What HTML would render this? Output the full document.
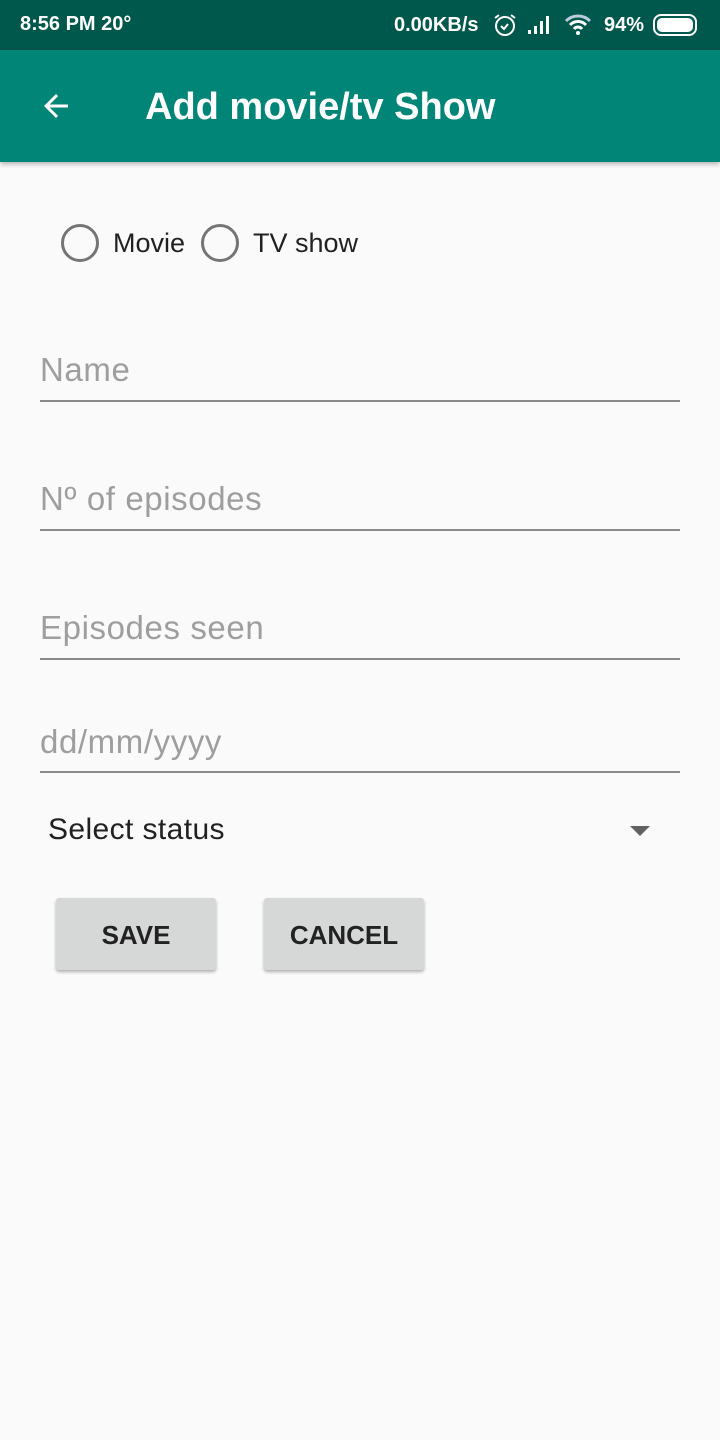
<!DOCTYPE html>
<html><head><style>
body{margin:0;width:720px;height:1440px;background:#fafafa;font-family:"Liberation Sans",sans-serif;position:relative;overflow:hidden}
.sb{position:absolute;top:0;left:0;width:720px;height:50px;background:#00574b;color:#fff;font-weight:bold;font-size:20px}
.ab{position:absolute;top:50px;left:0;width:720px;height:112px;background:#008577;box-shadow:0 2px 5px rgba(0,0,0,.3)}
.t{position:absolute;white-space:nowrap}
.radio{position:absolute;width:38px;height:38px;border:3px solid #757575;border-radius:50%;box-sizing:border-box}
.in{position:absolute;left:40px;width:640px;border-bottom:2px solid #8a8a8a;color:#9e9e9e;font-size:33px;letter-spacing:0.6px}
.btn{position:absolute;top:898px;width:160px;height:72px;background:#d6d7d7;border-radius:3px;box-shadow:0 2px 3px rgba(0,0,0,.3);font-size:26px;color:#222;text-align:center;line-height:74px;font-weight:bold}
</style></head><body>
<div class="sb">
<span class="t" style="left:20px;top:13px">8:56 PM 20°</span>
<span class="t" style="left:394px;top:14px">0.00KB/s</span>
<svg class="t" style="left:492px;top:12px" width="26" height="26" viewBox="0 0 26 26" fill="none" stroke="#fff" stroke-width="2"><circle cx="13" cy="14" r="9"/><path d="M9 14l3 3 4-5M3 6l4-3M23 6l-4-3"/></svg>
<svg class="t" style="left:526px;top:14px" width="28" height="22"><rect x="2" y="16" width="3" height="4" fill="#fff"/><rect x="8" y="12" width="3" height="8" fill="#fff"/><rect x="14" y="7" width="3" height="13" fill="#fff"/><rect x="20" y="2" width="3" height="18" fill="#fff"/></svg>
<svg class="t" style="left:564px;top:14px" width="28" height="22" viewBox="0 0 28 22"><path d="M2 7a17 17 0 0 1 24 0" stroke="#bcd" stroke-width="3" fill="none"/><path d="M6 11a11 11 0 0 1 16 0M10 15a5 5 0 0 1 8 0" stroke="#fff" stroke-width="3" fill="none"/><circle cx="14" cy="19" r="2" fill="#fff"/></svg>
<span class="t" style="left:604px;top:14px">94%</span>
<div class="t" style="left:653px;top:14px;width:44px;height:22px;border:2px solid #fff;border-radius:8px;box-sizing:border-box;padding:2px"><div style="background:#fff;height:14px;border-radius:5px"></div></div>
</div>
<div class="ab">
<svg class="t" style="left:38px;top:38px" width="36" height="36" viewBox="0 0 24 24"><path d="M20 11H7.8l5.6-5.6L12 4l-8 8 8 8 1.4-1.4L7.8 13H20z" fill="#fff"/></svg>
<span class="t" style="left:145px;top:36px;color:#fff;font-size:38px;font-weight:bold">Add movie/tv Show</span>
</div>
<div class="radio" style="left:61px;top:224px"></div>
<span class="t" style="left:113px;top:228px;font-size:27px;color:#212121">Movie</span>
<div class="radio" style="left:201px;top:224px"></div>
<span class="t" style="left:253px;top:228px;font-size:27px;color:#212121">TV show</span>
<div class="in" style="top:351px;height:49px">Name</div>
<div class="in" style="top:480px;height:49px">Nº of episodes</div>
<div class="in" style="top:609px;height:49px">Episodes seen</div>
<div class="in" style="top:723px;height:48px">dd/mm/yyyy</div>
<span class="t" style="left:48px;top:813px;font-size:30px;color:#212121;letter-spacing:0.4px">Select status</span>
<div class="t" style="left:630px;top:826px;width:0;height:0;border-left:10px solid transparent;border-right:10px solid transparent;border-top:10px solid #616161"></div>
<div class="btn" style="left:56px">SAVE</div>
<div class="btn" style="left:264px">CANCEL</div>
</body></html>
